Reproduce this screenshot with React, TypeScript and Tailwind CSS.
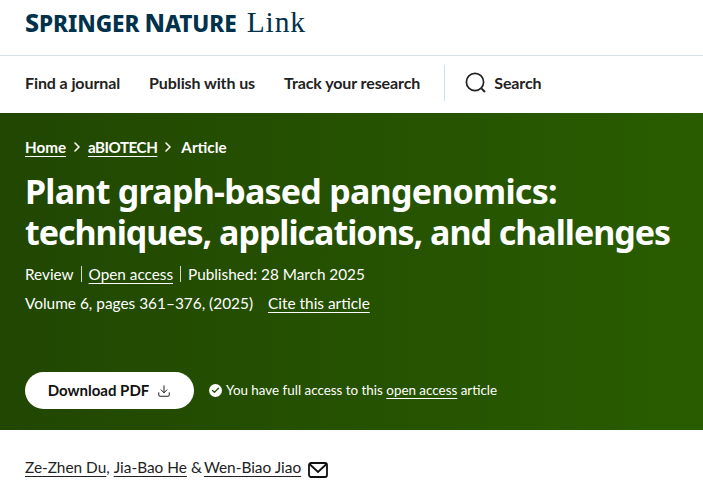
import React from 'react';
import { ChevronRight, Download, Check } from 'lucide-react';

const App: React.FC = () => {
  return (
    <div className="w-[703px] h-[488px] overflow-hidden bg-white text-[#222] font-['Lato','Noto_Sans',sans-serif]">
      {/* Logo */}
      <div className="h-[56px] flex items-baseline pt-[8px] px-[25px] border-b border-[#d3e0ea] text-[#01324b] whitespace-nowrap">
        <span className="font-['Noto_Sans',sans-serif] font-extrabold text-[25px] leading-none tracking-[-0.05px]">
          S<span className="text-[22.5px]">PRINGER</span>
          <span className="ml-[5px]">N</span><span className="text-[22.5px]">ATURE</span>
        </span>
        <span className="ml-[10px] font-['Liberation_Serif',serif] text-[29.5px] leading-none tracking-[0.9px]">Link</span>
      </div>

      {/* Navigation */}
      <nav className="h-[57px] flex items-center pb-[3px] px-[25px] text-[16px] font-bold text-[#222] tracking-[-0.1px] whitespace-nowrap">
        <span>Find a journal</span>
        <span className="ml-[29px]">Publish with us</span>
        <span className="ml-[29px]">Track your research</span>
        <div className="ml-[24px] w-px h-[36px] bg-[#c5e0f4]" />
        <svg className="ml-[20px] w-[22px] h-[22px]" viewBox="0 0 22 22" fill="none" stroke="#222" strokeWidth="1.7">
          <circle cx="10" cy="10" r="8.6" />
          <path d="M16.4 16.4 L20 20" strokeWidth="2" />
        </svg>
        <span className="ml-[7px]">Search</span>
      </nav>

      {/* Article header */}
      <section className="h-[317px] bg-[linear-gradient(90deg,#214702,#295c00)] text-white px-[25px] pt-[23px] whitespace-nowrap">
        <div className="flex items-center text-[15.2px] font-bold leading-[22px]">
          <span className="underline underline-offset-[3px] decoration-1">Home</span>
          <ChevronRight className="mx-[3px] w-[16px] h-[16px]" strokeWidth={2.4} />
          <span className="underline underline-offset-[3px] decoration-1 tracking-[-0.5px]">aBIOTECH</span>
          <ChevronRight className="ml-[3px] mr-[5px] w-[16px] h-[16px]" strokeWidth={2.4} />
          <span>Article</span>
        </div>
        <h1 className="mt-[13px] text-[34px] leading-[41px] font-bold font-['Noto_Sans',sans-serif] tracking-[-0.75px]">
          Plant graph-based pangenomics:<br />
          <span className="tracking-[-1.03px]">techniques, applications, and challenges</span>
        </h1>
        <div className="mt-[10px] flex items-center text-[15.3px] leading-[22px]">
          <span>Review</span>
          <span className="mx-[7px] w-px h-[16px] bg-white/80" />
          <span className="underline underline-offset-[3px] decoration-1">Open access</span>
          <span className="mx-[7px] w-px h-[16px] bg-white/80" />
          <span>Published: 28 March 2025</span>
        </div>
        <div className="mt-[7px] flex items-center text-[15.4px] leading-[22px]">
          <span>Volume 6, pages 361–376, (2025)</span>
          <span className="ml-[15px] underline underline-offset-[3px] decoration-1">Cite this article</span>
        </div>
        <div className="mt-[58px] flex items-center">
          <div className="w-[169px] h-[37px] rounded-full bg-white text-[#111] flex items-center justify-center text-[15px] font-bold">
            Download PDF
            <Download className="ml-[8px] w-[14px] h-[14px]" strokeWidth={1.6} />
          </div>
          <div className="ml-[15px] w-[13px] h-[13px] rounded-full bg-white flex items-center justify-center">
            <Check className="w-[9px] h-[9px] text-[#224d02]" strokeWidth={3.5} />
          </div>
          <span className="ml-[4px] text-[13.4px]">
            You have full access to this <span className="underline underline-offset-[3px] decoration-1">open access</span> article
          </span>
        </div>
      </section>

      {/* Authors */}
      <div className="mt-[26px] px-[25px] flex items-center text-[15.4px] whitespace-nowrap">
        <span className="underline underline-offset-[3px] decoration-1">Ze-Zhen Du</span>
        <span>,&nbsp;</span>
        <span className="underline underline-offset-[3px] decoration-1">Jia-Bao He</span>
        <span className="ml-[4px] mr-[2px]">&amp;</span>
        <span className="underline underline-offset-[3px] decoration-1">Wen-Biao Jiao</span>
        <svg className="ml-[7px] mt-[4px] w-[20px] h-[16px]" viewBox="0 0 20 16" fill="none" stroke="#111" strokeWidth="1.8">
          <rect x="1" y="1" width="18" height="14" rx="2" />
          <path d="M1.5 2 L10 10 L18.5 2" />
        </svg>
      </div>
    </div>
  );
};

export default App;
